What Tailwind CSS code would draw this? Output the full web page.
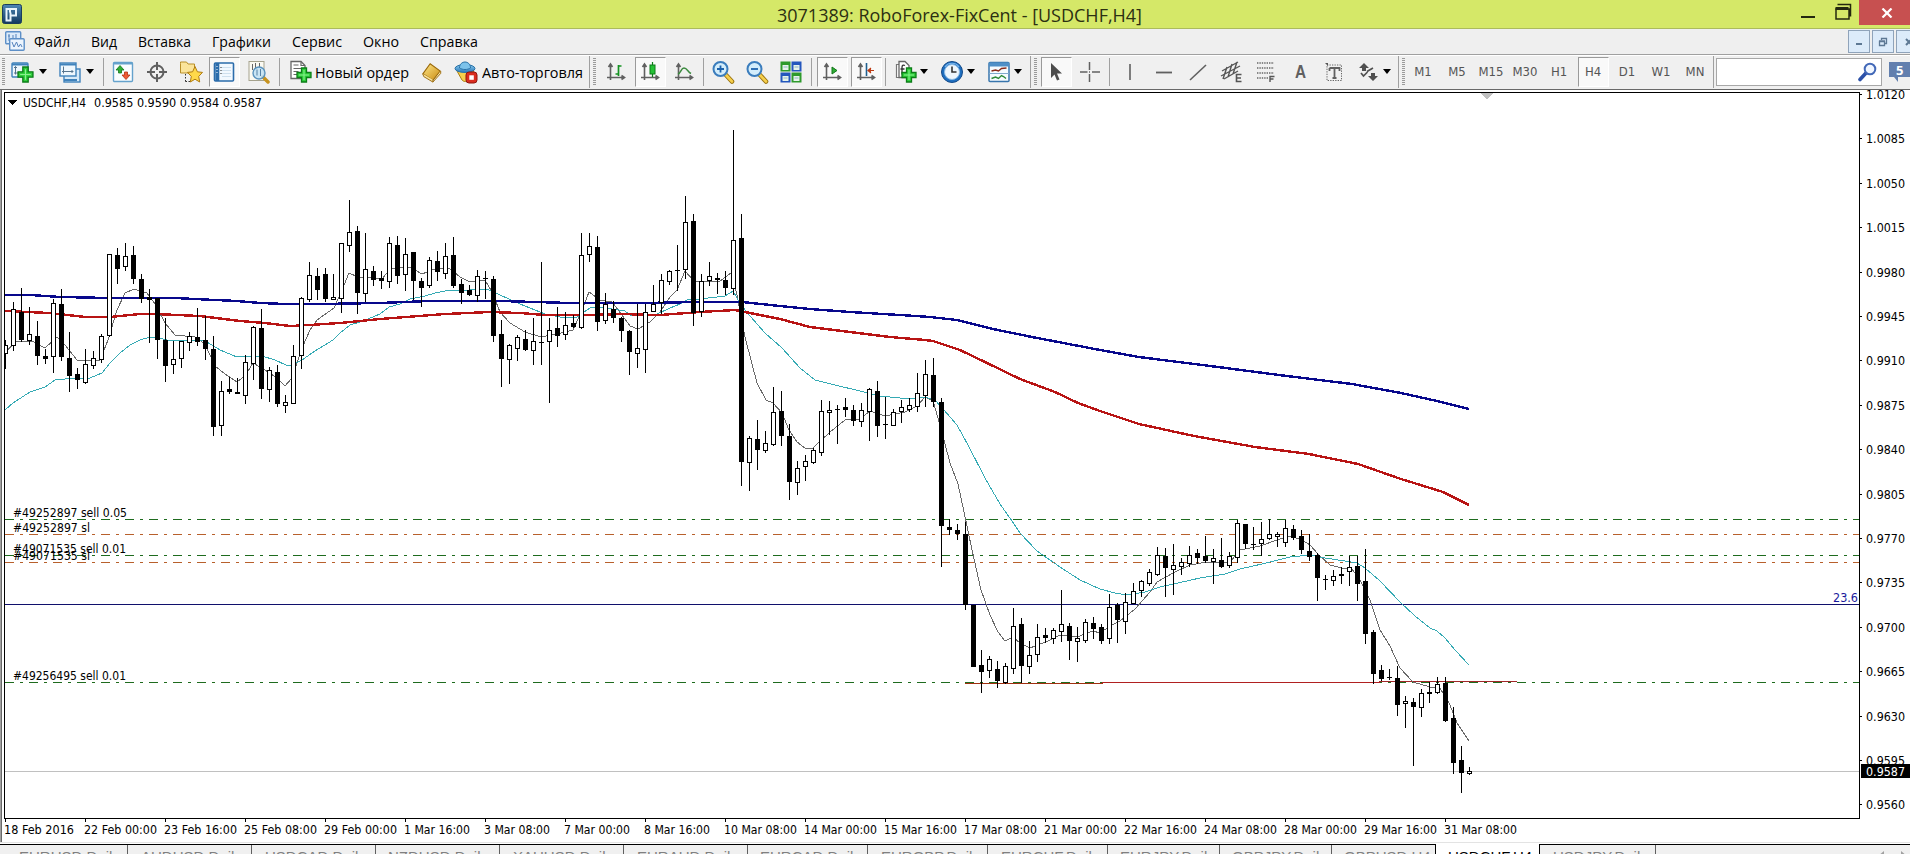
<!DOCTYPE html>
<html lang="ru">
 <head>
    <meta charset="UTF-8">
    <meta name="viewport" content="width=device-width, initial-scale=1.0">
    <title>3071389: RoboForex-FixCent - [USDCHF,H4]</title>
    <script src="https://cdn.jsdelivr.net/npm/@tailwindcss/browser@4"></script>
 </head>
 <body class="relative flex flex-col w-[1910px] h-[854px] overflow-hidden bg-[#f0f0f0] font-['Open_Sans','Noto_Sans',sans-serif] text-black">

    <!-- Shared symbols -->
    <svg class="absolute w-0 h-0">
        <defs>
            <linearGradient id="gBlue" x1="0" y1="0" x2="0" y2="1"><stop offset="0" stop-color="#4d87b5"/><stop offset="1" stop-color="#12395f"/></linearGradient>
            <linearGradient id="gGold" x1="0" y1="0" x2="1" y2="1"><stop offset="0" stop-color="#ffe98a"/><stop offset="1" stop-color="#c98a10"/></linearGradient>
            <linearGradient id="gSky" x1="0" y1="0" x2="0" y2="1"><stop offset="0" stop-color="#8ccbf0"/><stop offset="1" stop-color="#2878b8"/></linearGradient>
        </defs>
        <symbol id="plus" viewBox="0 0 16 16"><path d="M5.500 1h5v4.500H15v5h-4.500V15h-5v-4.500H1v-5h4.500z" fill="#2fd03c" stroke="#0c7d18" stroke-width="1.300"/><path d="M8 3v10M3 8h10" stroke="#8af090" stroke-width="1"/></symbol>
        <symbol id="axes" viewBox="0 0 20 20"><path d="M4.500 3v15M1 15.500h17M2.500 5l2-3 2 3M15.500 13.500l3 2-3 2" fill="none" stroke="#606060" stroke-width="1.600"/></symbol>
        <symbol id="lens" viewBox="0 0 24 24"><path d="M15 15l6 6.500" stroke="#9a7410" stroke-width="4.600" stroke-linecap="round"/><path d="M15 15l6 6.500" stroke="#f6cf4c" stroke-width="2.600" stroke-linecap="round"/><circle cx="9.500" cy="9" r="7" fill="#d3edfb" stroke="#3b7dbd" stroke-width="2"/></symbol>
        <symbol id="down" viewBox="0 0 8 5"><path d="M0 0h8L4 5z"/></symbol>
    </svg>

    <!-- Title bar -->
    <header class="flex h-[29px] shrink-0 bg-[#d5e868] border-b border-[#acbb5c]">
        <div class="flex w-[777px] pl-[2px] pt-[4px]">
            <svg width="20" height="20" viewBox="0 0 20 20"><rect x=".5" y=".5" width="19" height="19" rx="2" fill="url(#gBlue)" stroke="#1b3d5c"/><path d="M4.500 16.500V5H14v6.500H8.500V16.500z M8 5v3.500M8.500 11.500V8.500" fill="none" stroke="#e8f4fb" stroke-width="2"/></svg>
        </div>
        <div class="w-[1024px] text-[18px]">
            <svg width="400" height="28" fill="#2c3012"><text x="0" y="22" textLength="365" lengthAdjust="spacingAndGlyphs">3071389: RoboForex-FixCent - [USDCHF,H4]</text></svg>
        </div>
        <div class="flex w-[58px]">
            <svg width="58" height="28"><rect x="0" y="16" width="14" height="2" fill="#24280f"/><path d="M36.500 4.500h13v12M35 9h13v10H35z" fill="none" stroke="#24280f" stroke-width="1.500"/><path d="M34.500 8.500h13" stroke="#24280f" stroke-width="3"/></svg>
        </div>
        <div class="flex items-center justify-center w-[51px] h-[25px] pl-[5px] bg-[#c75050]">
            <svg width="12" height="10" viewBox="0 0 12 10"><path d="M1.500 .5l9 9M10.500 .5l-9 9" stroke="#fff" stroke-width="2.200"/></svg>
        </div>
    </header>

    <!-- Menu -->
    <nav class="flex h-[26px] shrink-0 bg-[#efefef] border-b border-[#a0a0a0] text-[15px] text-[#111]">
        <div class="w-[34px] pl-[5px] pt-[2px]">
            <svg width="20" height="20" viewBox="0 0 20 20"><rect x=".7" y=".7" width="15" height="12" rx="1" fill="#dcebfa" stroke="#5d8fc7" stroke-width="1.400"/><path d="M4 3v7M3 5h2M8 4v5M11 3v4" stroke="#5583bd"/><rect x="4.700" y="7.700" width="14.500" height="11.500" rx="1" fill="#edf5fd" stroke="#5d8fc7" stroke-width="1.400"/><path d="M7 11l2 5 2.500-5 2 5 2-3 1.500 3" fill="none" stroke="#5583bd"/></svg>
        </div>
        <svg class="w-[57px] h-[25px]"><text y="17.500" textLength="36" lengthAdjust="spacingAndGlyphs">Файл</text></svg>
        <svg class="w-[47px] h-[25px]"><text y="17.500" textLength="26" lengthAdjust="spacingAndGlyphs">Вид</text></svg>
        <svg class="w-[74px] h-[25px]"><text y="17.500" textLength="53" lengthAdjust="spacingAndGlyphs">Вставка</text></svg>
        <svg class="w-[80px] h-[25px]"><text y="17.500" textLength="59" lengthAdjust="spacingAndGlyphs">Графики</text></svg>
        <svg class="w-[71px] h-[25px]"><text y="17.500" textLength="50" lengthAdjust="spacingAndGlyphs">Сервис</text></svg>
        <svg class="w-[57px] h-[25px]"><text y="17.500" textLength="36" lengthAdjust="spacingAndGlyphs">Окно</text></svg>
        <svg class="flex-1 h-[25px]"><text y="17.500" textLength="58" lengthAdjust="spacingAndGlyphs">Справка</text></svg>
        <div class="flex gap-[2px] pt-px w-[62px]">
            <div class="flex items-center justify-center w-[22px] h-[23px] shrink-0 bg-[#dcebfa] border border-[#8fa3ba]"><svg width="10" height="10"><rect x="2" y="6" width="6" height="2" fill="#5d7894"/></svg></div>
            <div class="flex items-center justify-center w-[22px] h-[23px] shrink-0 bg-[#dcebfa] border border-[#8fa3ba]"><svg width="10" height="10"><path d="M3.500 3V1.500h5v5H7M1.500 4.500h5v4h-5zM1 4h6M3 1.500h6" fill="none" stroke="#5d7894" stroke-width="1.300"/></svg></div>
            <div class="flex items-center w-[22px] h-[23px] pl-[8px] shrink-0 bg-[#dcebfa] border border-[#8fa3ba]"><svg width="8" height="8"><path d="M1 1l6 6M7 1l-6 6" stroke="#5d7894" stroke-width="2"/></svg></div>
        </div>
    </nav>

    <!-- Toolbar -->
    <div class="flex h-[34px] pb-[2px] shrink-0 items-center bg-[#f0f0f0] border-t border-white [&>*]:shrink-0">
        <div class="flex w-[8px] pl-[2px]"><div class="w-[3px] h-[27px] bg-[repeating-linear-gradient(#9a9a9a_0_1px,#f0f0f0_1px_2px)]"></div></div>
        <div class="flex w-[28px] justify-center">
            <svg width="24" height="24" viewBox="0 0 24 24"><rect x="2" y="3" width="16" height="14" rx="1" fill="#eef7fd" stroke="#3f82bb" stroke-width="1.400"/><path d="M2 4.500h16" stroke="#3f82bb" stroke-width="2"/><path d="M5.500 6.500v8M4 8l1.500-1.500L7 8M4 13h9" fill="none" stroke="#57758e"/><use href="#plus" x="7" y="6" width="17" height="17"/></svg>
        </div>
        <div class="flex w-[14px] pl-[3px]"><svg width="8" height="5"><use href="#down"/></svg></div>
        <div class="flex w-[34px] pl-[6px] justify-center">
            <svg width="24" height="24" viewBox="0 0 24 24"><rect x="6" y="9" width="16" height="13" fill="#d7eaf8" stroke="#3f82bb" stroke-width="1.400"/><rect x="2" y="3" width="16" height="13" fill="#eef7fd" stroke="#3f82bb" stroke-width="1.400"/><path d="M2 4.500h16M6 20h13" stroke="#3f82bb" stroke-width="2"/><path d="M5.500 6.500v7M4 11.500h11M13.500 10l1.500 1.500-1.500 1.500" fill="none" stroke="#57758e"/></svg>
        </div>
        <div class="flex w-[12px] pl-[2px]"><svg width="8" height="5"><use href="#down"/></svg></div>
        <div class="flex w-[10px] pl-[7px]"><div class="w-px h-[28px] bg-[#a0a0a0]"></div></div>
        <div class="flex w-[34px] justify-center">
            <svg width="22" height="22" viewBox="0 0 22 22"><rect x="1.500" y="1.500" width="19" height="19" rx="1" fill="#fafdff" stroke="#65a2cc" stroke-width="1.400"/><path d="M1.500 2.500h19" stroke="#65a2cc" stroke-width="2"/><path d="M8 4.500l4 4.500H9.500v3h-3V9H4z" fill="#2fae35" stroke="#12761a" stroke-width=".8"/><path d="M14 18.500l-4-4.500h2.500v-3h3v3H18z" fill="#ee5a35" stroke="#b3300f" stroke-width=".8"/></svg>
        </div>
        <div class="flex w-[34px] justify-center">
            <svg width="22" height="22" viewBox="0 0 22 22" fill="none" stroke="#606060" stroke-width="2"><circle cx="11" cy="11" r="6.500"/><path d="M11 1v8M11 13v8M1 11h8M13 11h8"/></svg>
        </div>
        <div class="flex w-[34px] justify-center">
            <svg width="24" height="24" viewBox="0 0 24 24"><path d="M1.500 3.500V2h6l1.500 2h6.500v9h-14z" fill="#fbe49a" stroke="#b98f28"/><path d="M6.500 14v8M6.500 21.500h5" stroke="#333" stroke-dasharray="1.500 1.500"/><path d="M16 6.500l2.400 5.300 5.100.6-3.800 4 1 5.600-4.700-2.800-4.700 2.800 1-5.600-3.800-4 5.100-.6z" fill="#ffd94a" stroke="#b07c12"/></svg>
        </div>
        <div class="flex w-[34px] justify-center pr-[2px]">
            <div class="flex items-center justify-center w-[31px] h-[30px] bg-[#f9f9f9] border border-white border-t-[#9a9a9a] border-l-[#9a9a9a]">
                <svg width="22" height="22" viewBox="0 0 22 22"><rect x="1.500" y="2" width="19" height="18" rx="1" fill="#f2f9ff" stroke="#2b6cab" stroke-width="1.600"/><path d="M4.300 2v18" stroke="#2b6cab" stroke-width="4"/><path d="M4 5v1M4 8v1M4 11v1" stroke="#fff"/><path d="M9 6.500h9M9 9.500h9M9 12.500h9M9 15.500h9" stroke="#c4d9ea" stroke-width=".8"/><path d="M7.500 6.500h1M7.500 9.500h1M7.500 12.500h1" stroke="#222"/></svg>
            </div>
        </div>
        <div class="flex w-[34px] justify-center">
            <svg width="24" height="24" viewBox="0 0 24 24"><rect x="2" y="1.500" width="15" height="19" fill="#fbfaf2" stroke="#a5a28d"/><path d="M5.500 4v6M8.500 3v5M12.500 3v5" stroke="#666"/><path d="M16 17l5 5" stroke="#c79320" stroke-width="3.500" stroke-linecap="round"/><circle cx="12" cy="13" r="6" fill="#bfe0f5" fill-opacity=".85" stroke="#5a93be" stroke-width="1.400"/><path d="M10 9.500v6M13.500 9v7" stroke="#5682a6"/></svg>
        </div>
        <div class="flex w-[8px] pl-[3px]"><div class="w-px h-[28px] bg-[#a0a0a0]"></div></div>
        <div class="flex w-[31px] pl-[5px]">
            <svg width="24" height="24" viewBox="0 0 24 24"><path d="M2 1.500h10l4 4v13H2z" fill="#fff" stroke="#666" stroke-width="1.300"/><path d="M12 1.500v4h4M4.500 5h5M4.500 8.500h8M4.500 11.500h5M4.500 14.500h5" fill="none" stroke="#666" stroke-width="1.200"/><use href="#plus" x="7" y="7" width="16" height="16"/></svg>
        </div>
        <svg class="w-[99px] h-[22px] text-[15px]"><text y="16.500" textLength="94" lengthAdjust="spacingAndGlyphs">Новый ордер</text></svg>
        <div class="flex w-[36px] justify-center">
            <svg width="22" height="24" viewBox="0 0 24 24"><path d="M2 14L10 3l11 8-8 10z" fill="url(#gGold)" stroke="#99680a" stroke-width="1.200"/><path d="M2 14l1 3 10 6v-2.500M13 23l8.500-9.500V11" fill="#f8e29a" stroke="#99680a"/></svg>
        </div>
        <div class="flex w-[32px] justify-center">
            <svg width="24" height="24" viewBox="0 0 24 24"><path d="M3 11h17l-6 9c-2 2-4 2-6 0z" fill="#f6cf4c" stroke="#a87d14"/><ellipse cx="11" cy="8.500" rx="10" ry="4" fill="url(#gSky)" stroke="#2a73a8"/><path d="M5.500 8c0-8 11-8 11 0-3 2-8 2-11 0z" fill="#7cc2ea" stroke="#2a73a8"/><rect x="12" y="12" width="11" height="11" rx="3" fill="#da2c1f" stroke="#8f160e"/><rect x="15.300" y="15.300" width="4.500" height="4.500" fill="#fff"/></svg>
        </div>
        <svg class="w-[102px] h-[22px] text-[15px]"><text y="16.500" textLength="101" lengthAdjust="spacingAndGlyphs">Авто-торговля</text></svg>
        <div class="flex items-center w-[15px] pl-[5px] gap-[3px]"><div class="w-px h-[32px] bg-[#a0a0a0]"></div><div class="w-[3px] h-[27px] bg-[repeating-linear-gradient(#9a9a9a_0_1px,#f0f0f0_1px_2px)]"></div></div>
        <div class="flex w-[34px] justify-center">
            <svg width="20" height="20" viewBox="0 0 20 20"><use href="#axes"/><path d="M12.500 3v11M12.500 4h3M9.500 12h3" stroke="#149222" stroke-width="1.700"/></svg>
        </div>
        <div class="flex w-[34px] justify-center">
            <div class="flex items-center justify-center w-[31px] h-[30px] bg-[#f9f9f9] border border-white border-t-[#9a9a9a] border-l-[#9a9a9a]">
                <svg width="20" height="20" viewBox="0 0 20 20"><use href="#axes"/><path d="M12.500 0v15" stroke="#0d7b18" stroke-width="1.200"/><rect x="10" y="3" width="5" height="9" fill="#25c236" stroke="#0d7b18"/></svg>
            </div>
        </div>
        <div class="flex w-[34px] justify-center">
            <svg width="20" height="20" viewBox="0 0 20 20"><use href="#axes"/><path d="M4 12c3-1 3-6 6-6s4 4 7 5.500" fill="none" stroke="#3b8a3e" stroke-width="1.500"/></svg>
        </div>
        <div class="flex w-[5px] pl-[2px]"><div class="w-px h-[28px] bg-[#a0a0a0]"></div></div>
        <div class="flex w-[34px] justify-center">
            <svg width="24" height="24" viewBox="0 0 24 24"><use href="#lens"/><path d="M9.500 5.500v7M6 9h7" stroke="#1c62ad" stroke-width="1.800"/></svg>
        </div>
        <div class="flex w-[34px] justify-center">
            <svg width="24" height="24" viewBox="0 0 24 24"><use href="#lens"/><path d="M6 9h7" stroke="#1c62ad" stroke-width="1.800"/></svg>
        </div>
        <div class="flex w-[34px] justify-center">
            <svg width="22" height="22" viewBox="0 0 22 22"><rect x=".5" y=".5" width="10" height="10" fill="#2e9a2c"/><rect x="11.500" y=".5" width="10" height="10" fill="#2457bd"/><rect x=".5" y="11.500" width="10" height="10" fill="#2457bd"/><rect x="11.500" y="11.500" width="10" height="10" fill="#2e9a2c"/><path d="M2.500 4h6v5h-6zM13.500 4h6v5h-6zM2.500 15h6v5h-6zM13.500 15h6v5h-6z" fill="#e6f3ea"/><path d="M3.500 6h4M14.500 6h4M3.500 17h4M14.500 17h4" stroke="#8fb5c8"/></svg>
        </div>
        <div class="flex w-[7px] pl-[3px]"><div class="w-px h-[28px] bg-[#a0a0a0]"></div></div>
        <div class="flex w-[34px] justify-center">
            <div class="flex items-center justify-center w-[31px] h-[30px] bg-[#f9f9f9] border border-white border-t-[#9a9a9a] border-l-[#9a9a9a]">
                <svg width="20" height="20" viewBox="0 0 20 20"><use href="#axes"/><path d="M10 5l5 3.500-5 3.500z" fill="#2fae35" stroke="#12761a"/></svg>
            </div>
        </div>
        <div class="flex w-[34px] justify-center">
            <div class="flex items-center justify-center w-[31px] h-[30px] bg-[#f9f9f9] border border-white border-t-[#9a9a9a] border-l-[#9a9a9a]">
                <svg width="20" height="20" viewBox="0 0 20 20"><use href="#axes"/><path d="M10.500 1v13" stroke="#20608f" stroke-width="1.600"/><path d="M12 8.500h6M15 6l-3 2.500 3 2.500" fill="#d8481c" stroke="#b83a14" stroke-width="1.200"/></svg>
            </div>
        </div>
        <div class="flex w-[5px] pl-[2px]"><div class="w-px h-[28px] bg-[#a0a0a0]"></div></div>
        <div class="flex w-[32px] pl-[6px]">
            <svg width="24" height="24" viewBox="0 0 24 24"><path d="M2.500 4.500v13h9v-13z" fill="#fff" stroke="#777" stroke-width="1.200"/><path d="M5 1.500h6l4 4v12H5z" fill="#fff" stroke="#666" stroke-width="1.300"/><path d="M11 5.500c-2-1-3 0-3 2v7M6.500 9h4" fill="none" stroke="#333" stroke-width="1.300"/><use href="#plus" x="7" y="7" width="16" height="16"/></svg>
        </div>
        <div class="flex w-[16px]"><svg width="8" height="5"><use href="#down"/></svg></div>
        <div class="flex w-[31px] justify-center">
            <svg width="24" height="24" viewBox="0 0 24 24"><circle cx="12" cy="12" r="10.500" fill="#1f6fc0" stroke="#134a8a"/><circle cx="12" cy="12" r="7.500" fill="#eef6fd" stroke="#8dbce6"/><path d="M12 6.500V12h4.500" fill="none" stroke="#333" stroke-width="1.600"/><path d="M5 7c3-5 11-5 14 0" fill="none" stroke="#79b5ec" stroke-width="1.200"/></svg>
        </div>
        <div class="flex w-[19px]"><svg width="8" height="5"><use href="#down"/></svg></div>
        <div class="flex w-[26px] justify-center">
            <svg width="22" height="22" viewBox="0 0 22 22"><rect x="1" y="1.500" width="20" height="19" rx="1" fill="#f6fbff" stroke="#3976ad" stroke-width="1.500"/><path d="M1 3.500h20" stroke="#4f8fc7" stroke-width="4"/><path d="M1 12.500h20" stroke="#7fa9cc"/><path d="M3.500 10l4-1 3 1 3-2.500 5-.5" fill="none" stroke="#8a2b1a" stroke-width="1.400"/><path d="M3.500 17.500l4-1.500 3 1.500 3-3 2 1 2.500 2" fill="none" stroke="#2e8a38" stroke-width="1.400"/></svg>
        </div>
        <div class="flex w-[12px] pl-[2px]"><svg width="8" height="5"><use href="#down"/></svg></div>
        <div class="flex items-center w-[15px] pl-[6px] gap-[3px]"><div class="w-px h-[32px] bg-[#a0a0a0]"></div><div class="w-[3px] h-[27px] bg-[repeating-linear-gradient(#9a9a9a_0_1px,#f0f0f0_1px_2px)]"></div></div>
        <div class="flex w-[34px] justify-center">
            <div class="flex items-center justify-center w-[31px] h-[30px] bg-[#f9f9f9] border border-white border-t-[#9a9a9a] border-l-[#9a9a9a]">
                <svg width="14" height="20" viewBox="0 0 14 20"><path d="M2 1v15l3.500-3.500L8 18.500l2.500-1L8 11.500h5z" fill="#4d4d4d"/></svg>
            </div>
        </div>
        <div class="flex w-[34px] justify-center"><svg width="20" height="20" stroke="#606060" stroke-width="1.500"><path d="M9.500 0v8M9.500 12v8M0 10h7.500M12 10h8M9 10h1"/></svg></div>
        <div class="flex w-[6px] pl-[2px]"><div class="w-px h-[28px] bg-[#a0a0a0]"></div></div>
        <div class="flex w-[34px] justify-center"><svg width="20" height="20"><path d="M10 2v16" stroke="#606060" stroke-width="1.600"/></svg></div>
        <div class="flex w-[34px] justify-center"><svg width="20" height="20"><path d="M2 10.500h16" stroke="#606060" stroke-width="1.800"/></svg></div>
        <div class="flex w-[34px] justify-center"><svg width="20" height="20"><path d="M2 18L18 3" stroke="#606060" stroke-width="1.600"/></svg></div>
        <div class="flex w-[34px] justify-center">
            <svg width="24" height="24" viewBox="0 0 24 24" fill="none" stroke="#555" stroke-width="1.400"><path d="M2 11L18 2M1 16L20 6M4 19L18 11M3 19l4-12M8 17l4-13M13 14l4-12"/><path d="M21.500 14.500h-5v7h5M16.500 18h4.500" stroke-width="1.600"/></svg>
        </div>
        <div class="flex w-[34px] justify-center">
            <svg width="20" height="22" viewBox="0 0 20 22" fill="none" stroke="#666" stroke-width="1.400"><path d="M1 2h17M1 7h17M1 12h17M1 17h11" stroke-dasharray="1.400 1"/><path d="M18.500 15.500h-4.500V21M14 18h3.500" stroke="#555"/></svg>
        </div>
        <div class="flex w-[34px] justify-center text-[18px] leading-none font-bold text-[#606060] font-['Liberation_Sans',sans-serif]"><span class="inline-block scale-x-85">A</span></div>
        <div class="flex w-[34px] justify-center">
            <svg width="20" height="20" viewBox="0 0 20 20"><rect x="3" y="3" width="14.500" height="15.500" fill="none" stroke="#666" stroke-dasharray="1.300 1.200"/><path d="M5.500 6h10v3M5.500 9V6M10.500 6v10M8.500 16h4" fill="none" stroke="#606060" stroke-width="1.800"/><path d="M1 1h3v3z" fill="#555"/></svg>
        </div>
        <div class="flex w-[32px] pl-[7px]">
            <svg width="22" height="20" viewBox="0 0 22 20"><path d="M6 1l5 5H8v3H4V6H1zM15 19l-5-5h3v-3h4v3h3z" fill="#505050"/><path d="M3 11l2.500 3 4-4M9 9.500l6-3.500" fill="none" stroke="#505050" stroke-width="1.700"/></svg>
        </div>
        <div class="flex w-[10px]"><svg width="8" height="5"><use href="#down"/></svg></div>
        <div class="flex items-center w-[13px] pl-[5px] gap-[3px]"><div class="w-px h-[32px] bg-[#a0a0a0]"></div><div class="w-[3px] h-[27px] bg-[repeating-linear-gradient(#9a9a9a_0_1px,#f0f0f0_1px_2px)]"></div></div>
        <div class="flex items-center w-[307px] text-[13px] leading-none text-[#555] font-['DejaVu_Sans_Condensed','Noto_Sans',sans-serif] [&>*]:w-[34px] [&>*]:text-center">
            <div>M1</div>
            <div>M5</div>
            <div>M15</div>
            <div>M30</div>
            <div>H1</div>
            <div class="flex justify-center"><div class="flex items-center justify-center w-[31px] h-[30px] bg-[#f9f9f9] border border-white border-t-[#9a9a9a] border-l-[#9a9a9a]">H4</div></div>
            <div>D1</div>
            <div>W1</div>
            <div>MN</div>
        </div>
        <div class="w-px h-[32px] mr-[2px] bg-[#a0a0a0]"></div>
        <div class="flex items-center justify-end w-[166px] h-[28px] pr-[3px] bg-white border border-[#a8a8a8]">
            <svg width="20" height="20" viewBox="0 0 20 20"><path d="M8 11l-6 6.500" stroke="#2c51a8" stroke-width="3.600" stroke-linecap="round"/><circle cx="12" cy="7" r="5.300" fill="#f0f6ff" stroke="#4369b8" stroke-width="2"/></svg>
        </div>
        <div class="flex pl-[7px]">
            <svg width="21" height="22" viewBox="0 0 21 22"><path d="M0 1h21v15H9v5l-4-5H0z" fill="#627fae"/><text x="7" y="13.500" font-size="13" font-weight="bold" fill="#fff" font-family="Noto Sans">5</text></svg>
        </div>
    </div>

    <!-- Chart window -->
    <main class="h-[755px] shrink-0 bg-white border-t border-[#696969]">
        <svg id="chart" width="1910" height="754" viewBox="0 90 1910 754" class="block text-[12px] font-['DejaVu_Sans_Condensed','Noto_Sans',sans-serif]" shape-rendering="crispEdges"></svg>
    </main>

    <!-- Chart tabs -->
    <footer class="flex h-[10px] shrink-0 overflow-hidden bg-[#f0f0f0] text-[15px] leading-[24px] text-[#808080] whitespace-nowrap font-['Liberation_Sans',sans-serif]">
        <div class="w-[128px] h-full pl-[19px] border-t border-black"><div class="border-r border-[#606060]">EURUSD,Daily</div></div>
        <div class="w-[124px] h-full pl-[13px] border-t border-black"><div class="border-r border-[#606060]">AUDUSD,Daily</div></div>
        <div class="w-[124px] h-full pl-[13px] border-t border-black"><div class="border-r border-[#606060]">USDCAD,Daily</div></div>
        <div class="w-[124px] h-full pl-[12px] border-t border-black"><div class="border-r border-[#606060]">NZDUSD,Daily</div></div>
        <div class="w-[124px] h-full pl-[13px] border-t border-black"><div class="border-r border-[#606060]">XAUUSD,Daily</div></div>
        <div class="w-[124px] h-full pl-[13px] border-t border-black"><div class="border-r border-[#606060]">EURAUD,Daily</div></div>
        <div class="w-[120px] h-full pl-[12px] border-t border-black"><div class="border-r border-[#606060]">EURCAD,Daily</div></div>
        <div class="w-[120px] h-full pl-[13px] border-t border-black"><div class="border-r border-[#606060]">EURGBP,Daily</div></div>
        <div class="w-[120px] h-full pl-[13px] border-t border-black"><div class="border-r border-[#606060]">EURCHF,Daily</div></div>
        <div class="w-[112px] h-full pl-[12px] border-t border-black"><div class="border-r border-[#606060]">EURJPY,Daily</div></div>
        <div class="w-[112px] h-full pl-[12px] border-t border-black"><div class="border-r border-[#606060]">GBPJPY,Daily</div></div>
        <div class="w-[103px] h-full pl-[12px] border-t border-black">GBPUSD,H4</div>
        <div class="w-[105px] h-full pl-[12px] pt-px border-x border-black bg-white text-black">USDCHF,H4</div>
        <div class="w-[116px] h-full pl-[13px] border-t border-black"><div class="border-r border-[#606060]">USDJPY,Daily</div></div>
        <div class="flex flex-1 h-full justify-end gap-[17px] pt-[6px] pr-[3px] border-t border-black">
            <svg width="6" height="10"><path d="M6 0v10L0 5z" fill="#a0a0a0"/></svg>
            <svg width="6" height="10"><path d="M0 0v10l6-5z" fill="#a0a0a0"/></svg>
        </div>
    </footer>

    <script>
        const chart = document.getElementById('chart');
        let out = '';

        function line(x1, y1, x2, y2, color, extra) {
            out += `<path d="M${x1} ${y1}L${x2} ${y2}" stroke="${color}" fill="none" ${extra || ''}/>`;
        }
        function rect(x, y, w, h, fill) {
            out += `<rect x="${x}" y="${y}" width="${w}" height="${h}" fill="${fill}"/>`;
        }
        function text(x, y, str, w, color) {
            out += `<text x="${x}" y="${y}" textLength="${w}" lengthAdjust="spacingAndGlyphs" fill="${color || '#000'}">${str}</text>`;
        }

        // window frame
        rect(0, 90, 1, 752, '#a0a0a0');
        rect(1, 90, 1, 752, '#696969');
        rect(0, 842, 1910, 1, '#e3e3e3');

        // order levels, [y, color]
        [[519, '#1e6b1e'], [534, '#b8602c'], [555, '#1e6b1e'], [562, '#b8602c'], [682, '#1e6b1e']].forEach(function(l) {
            line(5, l[0] + .5, 1859, l[0] + .5, l[1], 'stroke-dasharray="9 6 3 6"');
        });
        rect(5, 604, 1854, 1, '#10106c');
        rect(5, 771, 1854, 1, '#c0c0c0');
        rect(965, 683, 138, 1, '#a03010');
        rect(1102, 682, 278, 1, '#b02020');
        rect(1379, 681, 138, 1, '#a02828');

        // moving averages
        const ma = [
            ['#696969', 1, '5,353 15,342 32,341 45,348 57,337 65,345 77,360 100,360 108,340 117,310 125,293 134,289 147,293 155,304 165,323 175,335 195,337 205,344 215,366 225,374 237,382 245,376 253,363 265,370 277,378 285,386 292,378 302,348 310,330 317,320 334,308 342,290 349,273 360,278 370,277 382,279 390,269 410,267 422,274 432,270 449,268 460,277 470,282 485,280 492,292 500,312 510,323 525,332 541,337 557,334 573,330 580,315 589,292 600,300 612,302 622,315 630,326 638,329 650,322 660,312 670,297 677,290 685,271 695,282 720,281 731,273 737,295 745,337 757,383 766,400 773,403 782,413 789,430 797,442 805,448 813,448 830,432 845,420 860,419 870,411 885,416 905,412 917,406 925,397 933,401 940,425 950,463 958,484 964,512 972,550 981,590 990,615 998,632 1005,641 1013,637 1020,643 1030,648 1048,641 1060,635 1077,637 1093,631 1100,633 1110,626 1120,621 1135,609 1150,592 1157,582 1175,572 1190,565 1207,562 1230,562 1240,550 1260,546 1280,539 1290,536 1302,540 1310,545 1318,554 1330,565 1342,568 1352,569 1360,580 1370,600 1380,630 1390,646 1400,668 1413,682 1430,687 1440,688 1450,705 1457,723 1469,741'],
            ['#35aab4', 1, '5,410 13,403 30,392 45,387 55,380 65,379 90,378 102,373 110,363 120,353 130,345 140,340 150,337 160,338 170,341 200,340 207,342 220,350 237,357 262,356 275,360 286,365 292,365 302,360 315,351 333,340 340,333 350,325 363,321 380,314 389,307 400,304 410,299 425,296 435,293 450,290 470,290 487,289 500,295 520,304 545,314 560,317 577,317 590,308 600,307 612,309 625,311 630,315 640,316 655,315 670,308 680,304 687,300 700,299 725,296 733,291 741,305 750,316 765,333 782,348 800,368 815,380 835,385 860,391 880,396 910,399 925,397 935,400 944,410 957,425 968,445 985,478 1000,504 1012,521 1020,533 1037,551 1060,567 1080,580 1100,589 1115,593 1127,595 1145,592 1160,587 1200,578 1225,574 1240,569 1262,564 1290,557 1310,555 1325,558 1345,561 1357,563 1365,568 1380,581 1400,602 1415,616 1430,628 1437,631 1445,638 1455,650 1469,665'],
            ['#b81414', 2.4, '5,311 50,313 85,317 110,317 140,314 155,314 200,316 240,321 265,323 290,326 310,325 340,323 360,321 380,319 445,314 490,312 520,313 545,315 590,315 620,314 660,315 700,312 735,310 745,312 780,319 810,327 850,332 890,337 925,340 933,341 960,350 987,363 1020,379 1055,392 1078,403 1100,411 1139,424 1194,436 1255,447 1309,454 1358,464 1401,479 1443,492 1469,505'],
            ['#08088c', 2.4, '5,295 30,295 60,297 110,298 175,298 215,300 237,301 260,303 285,304 320,304 380,303 430,301 500,301 570,303 640,303 700,302 742,302 780,306 810,309 850,312 900,315 930,317 957,320 993,329 1032,337 1100,350 1139,357 1218,367 1279,375 1352,384 1401,393 1437,401 1469,409']
        ];
        ma.forEach(function(m) {
            out += `<polyline points="${m[2]}" fill="none" stroke="${m[0]}" stroke-width="${m[1]}"/>`;
        });

        // candles: high, body top, body bottom, low, u = up / d = down
        const candles = `340 345 354 369 u|302 309 346 351 u|288 312 340 342 d|307 334 341 345 u|321 336 356 365 d|349 356 359 364 d|299 303 357 373 u|289 304 357 361 d|332 358 376 392 d|368 374 380 389 d
349 364 383 384 u|351 358 366 369 u|334 336 360 363 u|254 254 336 337 u|248 255 269 284 d|243 256 267 271 u|246 255 279 284 d|274 279 299 303 d|289 297 300 343 d|298 298 340 359 d
318 340 366 382 d|341 359 365 374 u|341 341 359 368 u|332 336 343 351 u|308 337 342 346 d|316 340 349 360 d|336 349 427 436 d|381 391 426 436 u|377 389 392 394 d|378 392 394 394 d
355 362 396 404 u|326 327 364 380 u|309 328 389 399 d|367 370 390 402 u|365 372 404 407 d|395 402 406 413 u|345 356 404 404 u|297 298 356 369 u|262 275 300 302 u|268 276 290 300 d
268 274 299 302 d|274 297 300 300 u|243 243 299 313 u|200 232 246 252 u|226 231 293 314 d|233 269 294 302 u|266 271 280 286 d|271 278 281 289 d|237 243 282 288 u|236 245 276 284 d
238 254 275 291 u|252 252 281 300 d|278 281 288 307 d|257 260 286 288 u|251 261 272 281 d|243 256 274 279 u|237 255 286 288 d|279 284 293 304 d|285 290 295 296 d|270 276 296 302 u
271 278 279 299 d|276 279 336 342 d|320 334 359 387 d|344 345 360 384 u|335 337 349 361 u|330 339 350 351 d|318 341 351 365 u|262 342 343 365 d|318 330 342 403 u|307 328 336 347 d
312 325 335 340 u|315 323 327 328 d|233 255 328 329 u|233 246 255 262 u|236 247 322 331 d|293 304 321 324 u|301 309 318 323 d|317 318 331 342 d|330 331 352 375 d|304 348 354 368 u
304 312 350 373 u|285 304 312 312 u|274 280 303 314 u|270 271 282 285 u|245 270 271 291 d|196 222 270 279 u|214 221 313 326 d|274 281 312 317 u|262 276 281 286 u|273 278 280 294 d
271 280 288 295 d|130 240 289 295 u|214 238 462 486 d|436 438 463 491 u|420 439 450 470 d|431 443 451 453 u|387 412 445 446 u|391 411 436 446 d|424 436 482 500 d|461 468 483 495 u
455 461 467 481 u|448 450 463 464 u|400 411 453 456 u|401 410 413 435 u|405 409 410 444 d|398 407 410 417 d|405 410 421 426 d|403 410 422 427 u|388 389 412 441 u|381 391 426 437 d
397 424 425 439 d|409 412 426 426 u|400 407 412 423 u|398 405 410 412 u|373 393 407 412 u|360 374 396 407 u|358 375 402 407 d|398 402 526 567 d|519 527 530 535 d|524 530 534 540 d
522 534 605 610 d|605 605 667 667 d|650 665 672 693 d|656 659 671 678 u|661 669 681 688 d|663 666 683 684 u|608 626 669 674 u|618 624 666 683 d|641 655 667 674 u|624 637 655 662 u
628 635 638 643 d|628 630 639 644 u|590 624 632 642 u|623 626 641 660 d|627 638 642 662 u|619 622 641 643 u|617 623 629 639 d|624 627 641 644 d|594 607 639 644 u|603 605 620 643 d
593 602 622 634 u|583 591 604 604 u|580 581 591 597 u|569 572 584 586 u|547 555 575 576 u|548 556 568 597 d|544 565 570 595 u|558 562 567 575 u|546 555 564 567 u|549 553 558 564 d
536 556 561 563 d|549 558 562 584 u|538 560 567 568 d|552 556 566 568 u|520 523 558 563 u|524 524 544 549 d|527 544 545 550 d|522 539 544 556 u|519 534 539 540 u|532 534 537 547 u
520 528 543 547 u|525 529 538 540 d|530 536 550 554 d|534 551 557 561 d|553 555 578 601 d|575 579 580 590 d|570 576 581 586 u|567 574 576 584 d|556 567 572 586 u|556 566 584 601 d
549 581 634 644 d|630 632 674 684 d|665 670 679 681 d|669 677 678 680 d|666 678 705 716 d|696 701 704 728 u|698 702 707 766 d|689 693 708 717 u|682 692 694 703 d|677 684 693 694 u
677 683 721 722 d|707 718 763 774 d|746 760 773 793 d|767 771 774 775 u`;
        candles.split(/[|\n]/).forEach(function(row, i) {
            const c = row.trim().split(' ');
            const x = 5 + i * 8;
            const left = Math.max(x - 2, 4);
            rect(x, +c[0], 1, c[3] - c[0], '#000');
            rect(left, +c[1], x + 3 - left, Math.max(c[2] - c[1], 1), '#000');
            if (c[4] === 'u') {
                rect(left + 1, +c[1] + 1, x + 1 - left, c[2] - c[1] - 2, '#fff');
            }
        });

        // plot border
        rect(4, 92, 1856, 1, '#000');
        rect(4, 92, 1, 727, '#000');
        rect(1859, 92, 1, 727, '#000');
        rect(4, 818, 1856, 1, '#000');

        // shift marker and header
        out += '<path d="M1480 93h13l-6.500 6.500z" fill="#c0c0c0"/><path d="M8 100h9l-4.500 5z"/>';
        text(23, 107, 'USDCHF,H4', 63);
        text(94, 107, '0.9585 0.9590 0.9584 0.9587', 168);

        // order labels
        text(13, 517, '#49252897 sell 0.05', 114);
        text(13, 532, '#49252897 sl', 77);
        text(13, 553, '#49071535 sell 0.01', 113);
        text(13, 560, '#49071535 sl', 77);
        text(13, 680, '#49256495 sell 0.01', 113);
        text(1833, 602, '23.6', 25, '#1a1a9c');

        // price scale
        for (let i = 0; i < 17; i++) {
            const y = Math.round(94 + i * 44.4);
            rect(1860, y, 2, 1, '#000');
            text(1866, y + 5, (1.012 - i * 0.0035).toFixed(4), 39);
        }
        rect(1861, 764, 49, 14, '#000');
        text(1866, 776, '0.9587', 39, '#fff');

        // time scale
        const dates = ['18 Feb 2016', '22 Feb 00:00', '23 Feb 16:00', '25 Feb 08:00', '29 Feb 00:00', '1 Mar 16:00', '3 Mar 08:00', '7 Mar 00:00', '8 Mar 16:00', '10 Mar 08:00', '14 Mar 00:00', '15 Mar 16:00', '17 Mar 08:00', '21 Mar 00:00', '22 Mar 16:00', '24 Mar 08:00', '28 Mar 00:00', '29 Mar 16:00', '31 Mar 08:00'];
        dates.forEach(function(d, i) {
            rect(5 + i * 80, 819, 1, 3, '#000');
            text(4 + i * 80, 834, d, d.length === 12 ? 73 : (i === 0 ? 70 : 66));
        });

        chart.innerHTML = out;
    </script>
 </body>
</html>
